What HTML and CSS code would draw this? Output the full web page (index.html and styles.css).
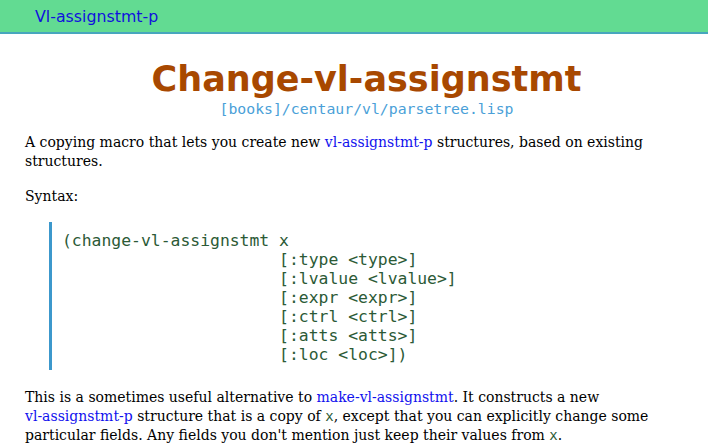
FILE: index.html
```html
<!DOCTYPE html>
<html>
<head>
<meta charset="utf-8">
<link rel="stylesheet" href="styles.css">
</head>
<body>
<div class="topbar"><a class="toplink" href="#">Vl-assignstmt-p</a></div>
<div class="content">
  <h1 class="title">Change-vl-assignstmt</h1>
  <div class="source">[books]/centaur/vl/parsetree.lisp</div>
  <p class="para">A copying macro that lets you create new <a href="#">vl-assignstmt-p</a> structures, based on existing structures.</p>
  <p class="para">Syntax:</p>
  <pre class="code">(change-vl-assignstmt x
                      [:type &lt;type&gt;]
                      [:lvalue &lt;lvalue&gt;]
                      [:expr &lt;expr&gt;]
                      [:ctrl &lt;ctrl&gt;]
                      [:atts &lt;atts&gt;]
                      [:loc &lt;loc&gt;])</pre>
  <p class="para">This is a sometimes useful alternative to <a href="#">make-vl-assignstmt</a>. It constructs a new <a href="#">vl-assignstmt-p</a> structure that is a copy of <span class="tt">x</span>, except that you can explicitly change some particular fields. Any fields you don't mention just keep their values from <span class="tt">x</span>.</p>
</div>
</body>
</html>
```
FILE: styles.css
```css
html, body {
  margin: 0;
  padding: 0;
  background: #ffffff;
}
body {
  font-family: "DejaVu Serif", serif;
  font-size: 14px;
  color: #000000;
}
a {
  color: #1111ee;
  text-decoration: none;
  white-space: nowrap;
}
.topbar {
  height: 32px;
  background: #62db92;
  border-bottom: 2px solid #47a6bd;
  display: flex;
  align-items: center;
  padding-left: 35px;
}
.toplink {
  font-family: "DejaVu Sans", sans-serif;
  font-size: 15.8px;
  color: #1111dd;
}
.content {
  padding: 0 0 0 25px;
}
.title {
  font-family: "DejaVu Sans", sans-serif;
  font-weight: bold;
  font-size: 35px;
  color: #a84800;
  text-align: center;
  margin: 23px 0 0 0;
  line-height: 44px;
}
.source {
  font-family: "DejaVu Sans Mono", monospace;
  font-size: 14.8px;
  color: #4a9fd8;
  text-align: center;
  line-height: 16px;
}
.para {
  line-height: 19px;
  margin: 16px 0;
}
.code {
  font-family: "DejaVu Sans Mono", monospace;
  font-size: 16.4px;
  line-height: 19px;
  color: #2c5a36;
  border-left: 3px solid #3c98cc;
  margin: 0 0 0 24px;
  padding: 9px 10px 6px 10px;
}
.code + .para {
  margin-top: 18px;
}
.tt {
  font-family: "DejaVu Sans Mono", monospace;
  color: #2c5a36;
}
```
